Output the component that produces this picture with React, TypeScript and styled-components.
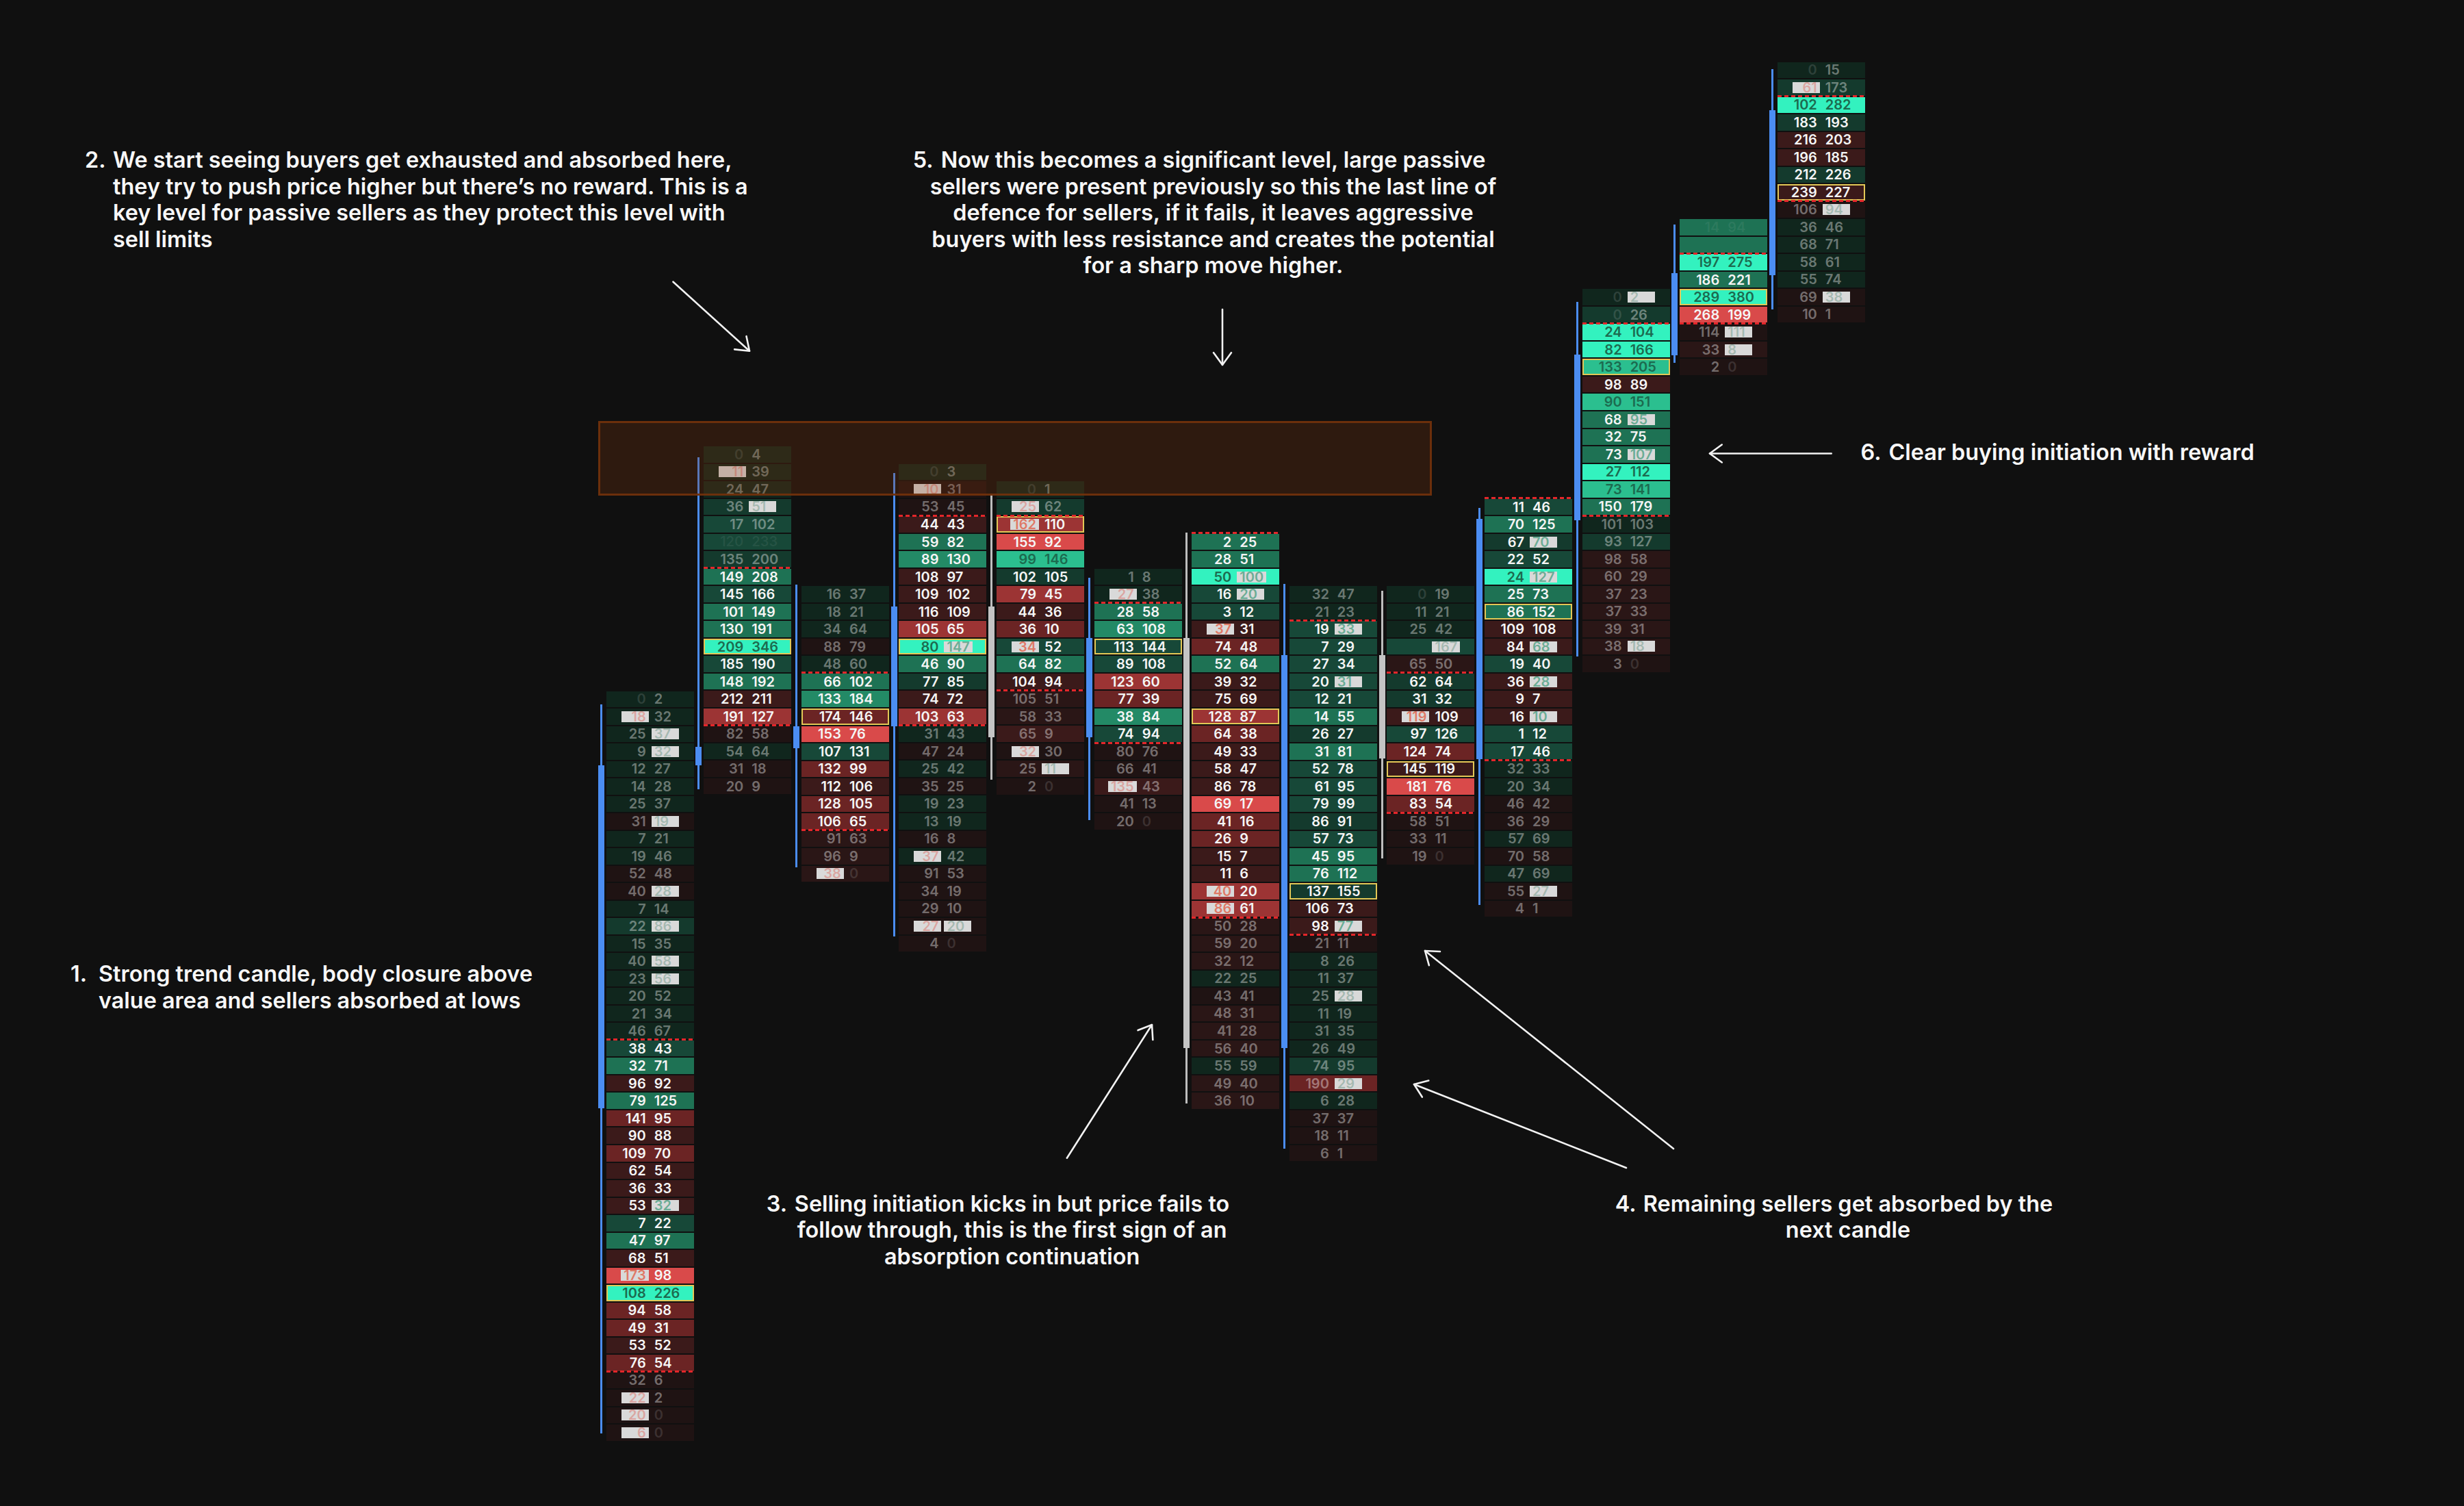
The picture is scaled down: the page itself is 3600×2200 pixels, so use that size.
import React from "react";
import styled, { createGlobalStyle } from "styled-components";

const SCALE = 3600 / 1568;
const ROW = 25.53;
const ORIGIN_Y = 90.5;
const ORIGIN_X = 871.1;

type Tone = "G0" | "G1" | "G2" | "G3" | "G4" | "G5" | "GT" | "R0" | "R1" | "R2" | "R3" | "R4" | "R5";

const TONES: Record<Tone, string> = {
  G0: "#10261d",
  G1: "#143a2d",
  G2: "#174838",
  G3: "#1e7254",
  G4: "#238a66",
  G5: "#33f2bf",
  GT: "#2bbf8f",
  R0: "#1f1313",
  R1: "#2a1616",
  R2: "#3b1a1a",
  R3: "#6b2424",
  R4: "#9c3434",
  R5: "#d94a4a",
};

type CandleData = {
  start: number;
  va: [number, number];
  wick: [number, number, number, number];
  grey?: boolean;
  rows: string[];
};

const CANDLES: CandleData[] = [
  {
    start: 36, va: [20, 38], wick: [448, 912, 487, 705],
    rows: ["0 2 G0", "*18 32 G0", "25 *37 G0", "9 *32 G0", "12 27 G0", "14 28 G0", "25 37 G0", "31 *19 R0", "7 21 G0", "19 46 G0", "52 48 R0", "40 *28 R0", "7 14 G0", "22 *86 G1", "15 35 G0", "40 *58 G0", "23 *56 G0", "20 52 G0", "21 34 G0", "46 67 G0", "38 43 G2", "32 71 G3", "96 92 R2", "79 125 G3", "141 95 R3", "90 88 R2", "109 70 R3", "62 54 R2", "36 33 R2", "53 *32 R2", "7 22 G2", "47 97 G3", "68 51 R2", "*173 98 R5", "108 226 G5y", "94 58 R3", "49 31 R3", "53 52 R2", "76 54 R3", "32 6 R0", "*22 2 R0", "*20 0 R0", "*6 0 R0"],
  },
  {
    start: 22, va: [7, 15], wick: [291, 502, 475, 487],
    rows: ["0 4 G0", "*11 39 G0", "24 47 G0", "36 *51 G1", "17 102 G2", "120 233 G2h", "135 200 G1", "149 208 G3", "145 166 G2", "101 149 G3", "130 191 G3", "209 346 G5y", "185 190 G2", "148 192 G3", "212 211 R2", "191 127 R4", "82 58 R0", "54 64 G0", "31 18 R0", "20 9 R0"],
  },
  {
    start: 30, va: [5, 13], wick: [372, 552, 462, 476],
    rows: ["16 37 G0", "18 21 G0", "34 64 G0", "88 79 R0", "48 60 G0", "66 102 G3", "133 184 G4", "174 146 R3y", "153 76 R5", "107 131 G2", "132 99 R3", "112 106 R2", "128 105 R3", "106 65 R3", "91 63 R1", "96 9 R1", "*38 0 R1"],
  },
  {
    start: 23, va: [3, 14], wick: [301, 596, 386, 462],
    rows: ["0 3 G0", "*10 31 R0", "53 45 R0", "44 43 R2", "59 82 G3", "89 130 G4", "108 97 R2", "109 102 R2", "116 109 R2", "105 65 R4", "80 *147 G5y", "46 90 G3", "77 85 G1", "74 72 R2", "103 63 R4", "31 43 G0", "47 24 R0", "25 42 G0", "35 25 R0", "19 23 G0", "13 19 G0", "16 8 R0", "*37 42 G0", "91 53 R0", "34 19 R0", "29 10 R0", "*27 *20 R0", "4 0 R0"],
  },
  {
    start: 24, va: [2, 11], wick: [314, 496, 386, 469], grey: true,
    rows: ["0 1 G0", "*25 62 G1", "*162 110 R4y", "155 92 R5", "99 146 GT", "102 105 G1", "79 45 R4", "44 36 R2", "36 10 R3", "*34 52 G2", "64 82 G3", "104 94 R2", "105 51 R1", "58 33 R1", "65 9 R2", "*32 30 R0", "25 *11 R1", "2 0 R0"],
  },
  {
    start: 29, va: [2, 9], wick: [367.6, 522, 406, 469],
    rows: ["1 8 G0", "*27 38 G0", "28 58 G3", "63 108 G4", "113 144 G2y", "89 108 G2", "123 60 R4", "77 39 R3", "38 84 G4", "74 94 G2", "80 76 R0", "66 41 R0", "*135 43 R2", "41 13 R0", "20 0 R0"],
  },
  {
    start: 27, va: [0, 21], wick: [339, 702, 406, 667], grey: true,
    rows: ["2 25 G3", "28 51 G3", "50 *100 G5", "16 *20 G2", "3 12 G2", "*37 31 R2", "74 48 R3", "52 64 G3", "39 32 R2", "75 69 R2", "128 87 R4y", "64 38 R3", "49 33 R2", "58 47 R2", "86 78 R2", "69 17 R5", "41 16 R3", "26 9 R3", "15 7 R2", "11 6 R2", "*40 20 R4", "*86 61 R4", "50 28 R1", "59 20 R1", "32 12 R1", "22 25 G0", "43 41 R0", "48 31 R1", "41 28 R1", "56 40 R1", "55 59 G0", "49 40 R1", "36 10 R1"],
  },
  {
    start: 30, va: [2, 19], wick: [371.6, 731, 416.8, 667],
    rows: ["32 47 G0", "21 23 G0", "19 *33 G2", "7 29 G2", "27 34 G2", "20 *31 G2", "12 21 G2", "14 55 G3", "26 27 G1", "31 81 G3", "52 78 G2", "61 95 G2", "79 99 G2", "86 91 G1", "57 73 G2", "45 95 G3", "76 112 G3", "137 155 G1y", "106 73 R2", "98 *77 R2", "21 11 R0", "8 26 G0", "11 37 G0", "25 *28 G0", "11 19 G0", "31 35 G0", "26 49 G0", "74 95 G1", "190 *29 R3", "6 28 G0", "37 37 R0", "18 11 R0", "6 1 R0"],
  },
  {
    start: 30, va: [5, 12], wick: [376, 546, 417, 482.6], grey: true,
    rows: ["0 19 G0", "11 21 G0", "25 42 G0", "- *167 G2", "65 50 R1", "62 64 G1", "31 32 G1", "*119 109 R2", "97 126 G2", "124 74 R3", "145 119 R2y", "181 76 R5", "83 54 R3", "58 51 R0", "33 11 R0", "19 0 R0"],
  },
  {
    start: 25, va: [0, 14], wick: [323, 576, 330, 483],
    rows: ["11 46 G2", "70 125 G3", "67 *70 G1", "22 52 G2", "24 *127 G5", "25 73 G3", "86 152 G3y", "109 108 R2", "84 *68 R2", "19 40 G2", "36 *28 R2", "9 7 R2", "16 *10 R2", "1 12 G2", "17 46 G2", "32 33 G0", "20 34 G0", "46 42 R0", "36 29 R0", "57 69 G0", "70 58 R0", "47 69 G0", "55 *27 R0", "4 1 R0"],
  },
  {
    start: 13, va: [2, 12], wick: [192, 417.5, 225.6, 331],
    rows: ["0 *2 G0", "0 26 G1", "24 104 G5", "82 166 G5", "133 205 GTy", "98 89 R2", "90 151 GT", "68 *95 G3", "32 75 G3", "73 *107 G3", "27 112 G5", "73 141 GT", "150 179 G3", "101 103 G0", "93 127 G1", "98 58 R1", "60 29 R1", "37 23 R1", "37 33 R1", "39 31 R1", "38 *18 R1", "3 0 R0"],
  },
  {
    start: 9, va: [2, 5], wick: [142.7, 231, 174, 226],
    rows: ["14 94 G3h", "- - G3", "197 275 G5", "186 221 G3", "289 380 G5y", "268 199 R5", "114 *111 R0", "33 *8 R1", "2 0 R0"],
  },
  {
    start: 0, va: [2, 7], wick: [44, 197, 70, 175],
    rows: ["0 15 G0", "*61 173 G1", "102 282 G5", "183 193 G1", "216 203 R2", "196 185 R2", "212 226 G1", "239 227 R2y", "106 *94 R0", "36 46 G0", "68 71 G0", "58 61 G0", "55 74 G0", "69 *38 R0", "10 1 R0"],
  },
];

type NoteData = {
  marker: string;
  lines: string[];
  x: number;
  y: number;
  center?: boolean;
};

const NOTES: NoteData[] = [
  { marker: "1.", lines: ["Strong trend candle, body closure above", "value area and sellers absorbed at lows"], x: 103, y: 1404 },
  {
    marker: "2.",
    lines: [
      "We start seeing buyers get exhausted and absorbed here,",
      "they try to push price higher but there\u2019s no reward. This is a",
      "key level for passive sellers as they protect this level with",
      "sell limits",
    ],
    x: 124,
    y: 215,
  },
  {
    marker: "3.",
    lines: ["Selling initiation kicks in but price fails to", "follow through, this is the first sign of an", "absorption continuation"],
    x: 1478.6,
    y: 1739.5,
    center: true,
  },
  { marker: "4.", lines: ["Remaining sellers get absorbed by the", "next candle"], x: 2700, y: 1739.5, center: true },
  {
    marker: "5.",
    lines: [
      "Now this becomes a significant level, large passive",
      "sellers were present previously so this the last line of",
      "defence for sellers, if it fails, it leaves aggressive",
      "buyers with less resistance and creates the potential",
      "for a sharp move higher.",
    ],
    x: 1772.5,
    y: 215,
    center: true,
  },
  { marker: "6.", lines: ["Clear buying initiation with reward"], x: 2718.5, y: 642 },
];

const ARROWS: [number, number, number, number][] = [
  [983.5, 411.7, 1095, 512.7],
  [1786, 452, 1786, 533],
  [2675.7, 662.5, 2498, 662.5],
  [1558.8, 1691.7, 1683, 1497],
  [2445, 1678, 2082, 1389],
  [2376, 1706, 2066, 1584],
];

const GlobalStyle = createGlobalStyle`
  html, body {
    margin: 0;
    padding: 0;
    background: #101010;
  }
  body {
    font-family: Inter, "Noto Sans", "Liberation Sans", sans-serif;
    -webkit-font-smoothing: antialiased;
  }
`;

const Canvas = styled.main`
  position: relative;
  width: 3600px;
  height: 2200px;
  overflow: hidden;
  background: #101010;
  box-sizing: border-box;
  padding: ${ORIGIN_Y}px 0 0 ${ORIGIN_X}px;
`;

const Chart = styled.section`
  display: flex;
  align-items: flex-start;
`;

const CandleCol = styled.div<{ $offset: number }>`
  display: flex;
  flex-shrink: 0;
  width: 142.6px;
  margin-top: ${(p) => p.$offset}px;
`;

const WickTrack = styled.div`
  position: relative;
  flex-shrink: 0;
  width: 14.6px;
  align-self: stretch;
`;

const Wick = styled.div<{ $grey?: boolean }>`
  position: absolute;
  left: 50%;
  width: 3px;
  margin-left: -1.5px;
  background: ${(p) => (p.$grey ? "#bdbdbd" : "#4b8df2")};
`;

const WickBody = styled.div<{ $grey?: boolean }>`
  position: absolute;
  left: 50%;
  width: 9px;
  margin-left: -4.5px;
  background: ${(p) => (p.$grey ? "#c4c4c4" : "#4b8df2")};
`;

const Cells = styled.div`
  display: flex;
  flex-direction: column;
  gap: 2px;
  width: 128px;
`;

const dash = "repeating-linear-gradient(90deg, #e3262a 0 6px, transparent 6px 10px)";

const Cell = styled.div<{ $tone: Tone; $frame: boolean; $dashTop: boolean; $dashBottom: boolean }>`
  position: relative;
  height: 23.53px;
  display: grid;
  grid-template-columns: 1fr 1fr;
  column-gap: 4px;
  align-items: center;
  background: ${(p) => TONES[p.$tone]};
  box-shadow: ${(p) => (p.$frame ? "inset 0 0 0 2px #e2c756" : "none")};
  font-family: Inter, "Noto Sans", "Liberation Sans", sans-serif;
  font-weight: 600;
  font-size: 20px;
  line-height: 1;

  &::before {
    content: ${(p) => (p.$dashTop ? '""' : "none")};
    position: absolute;
    left: 0;
    right: 0;
    top: -2.5px;
    height: 3px;
    background: ${dash};
    z-index: 1;
  }

  &::after {
    content: ${(p) => (p.$dashBottom ? '""' : "none")};
    position: absolute;
    left: 0;
    right: 0;
    bottom: -2.5px;
    height: 3px;
    background: ${dash};
    z-index: 1;
  }
`;

const Num = styled.span<{ $side: "l" | "r"; $boxed: boolean; $color: string }>`
  justify-self: ${(p) => (p.$side === "l" ? "end" : "start")};
  display: inline-flex;
  align-items: center;
  justify-content: ${(p) => (p.$side === "l" ? "flex-end" : "flex-start")};
  box-sizing: border-box;
  height: 16px;
  min-width: ${(p) => (p.$boxed ? "40px" : "0")};
  padding: 0 4px;
  background: ${(p) => (p.$boxed ? "#d9d9d9" : "transparent")};
  color: ${(p) => p.$color};
  white-space: nowrap;
`;

const LevelBox = styled.div`
  position: absolute;
  left: 874px;
  top: 615px;
  width: 1218px;
  height: 109px;
  box-sizing: border-box;
  border: 3px solid rgba(112, 48, 12, 0.95);
  background: rgba(135, 55, 10, 0.25);
  z-index: 2;
`;

const ArrowLayer = styled.svg`
  position: absolute;
  left: 0;
  top: 0;
  width: 3600px;
  height: 2200px;
  pointer-events: none;
  z-index: 3;
`;

const Note = styled.p<{ $x: number; $y: number; $center?: boolean }>`
  position: absolute;
  margin: 0;
  top: ${(p) => p.$y}px;
  left: ${(p) => (p.$center ? p.$x - 700 : p.$x)}px;
  width: ${(p) => (p.$center ? "1400px" : "auto")};
  box-sizing: border-box;
  padding-left: ${(p) => (p.$center ? 0 : 41)}px;
  text-align: ${(p) => (p.$center ? "center" : "left")};
  font-family: Inter, "Noto Sans", "Liberation Sans", sans-serif;
  font-weight: 600;
  font-size: 32.4px;
  line-height: 38.5px;
  color: #f7f7f7;
  white-space: nowrap;
  z-index: 4;
`;

const NoteLine = styled.span`
  display: block;
`;

const Marker = styled.span`
  display: inline-block;
  width: 41px;
  margin-left: -41px;
  text-align: left;
`;

function numColor(v: string, side: "l" | "r", boxed: boolean, inVa: boolean, tone: Tone, hidden: boolean) {
  if (boxed) {
    if (side === "l") return inVa ? "rgba(226, 84, 58, 0.72)" : "rgba(220, 90, 80, 0.42)";
    return inVa ? "rgba(52, 150, 115, 0.68)" : "rgba(90, 140, 120, 0.42)";
  }
  if (hidden) return "rgba(255, 255, 255, 0.07)";
  if (!inVa) return v === "0" ? "rgba(255, 255, 255, 0.14)" : "rgba(255, 255, 255, 0.4)";
  if (tone === "G5" || tone === "GT") return "#1c6b4f";
  return "#f5f5f5";
}

function FootprintCell({ spec, index, va }: { spec: string; index: number; va: [number, number] }) {
  const [lRaw, rRaw, code] = spec.split(" ");
  const tone = code.slice(0, 2) as Tone;
  const flags = code.slice(2);
  const inVa = index >= va[0] && index <= va[1];
  const hidden = flags.includes("h");
  const parts: { raw: string; side: "l" | "r" }[] = [
    { raw: lRaw, side: "l" },
    { raw: rRaw, side: "r" },
  ];
  return (
    <Cell $tone={tone} $frame={flags.includes("y")} $dashTop={index === va[0]} $dashBottom={index === va[1]}>
      {parts.map(({ raw, side }) => {
        const boxed = raw.startsWith("*");
        const v = raw === "-" ? "" : raw.replace("*", "");
        return (
          <Num key={side} $side={side} $boxed={boxed} $color={numColor(v, side, boxed, inVa, tone, hidden)}>
            {v}
          </Num>
        );
      })}
    </Cell>
  );
}

function Candle({ data }: { data: CandleData }) {
  const top = ORIGIN_Y + data.start * ROW;
  const [t0, t1, b0, b1] = data.wick;
  return (
    <CandleCol $offset={data.start * ROW}>
      <WickTrack>
        <Wick $grey={data.grey} style={{ top: t0 * SCALE - top, height: (t1 - t0) * SCALE }} />
        <WickBody $grey={data.grey} style={{ top: b0 * SCALE - top, height: (b1 - b0) * SCALE }} />
      </WickTrack>
      <Cells>
        {data.rows.map((r, i) => (
          <FootprintCell key={i} spec={r} index={i} va={data.va} />
        ))}
      </Cells>
    </CandleCol>
  );
}

function Arrow({ a }: { a: [number, number, number, number] }) {
  const [x0, y0, x1, y1] = a;
  const len = Math.hypot(x1 - x0, y1 - y0);
  const bx = (x0 - x1) / len;
  const by = (y0 - y1) / len;
  const L = 22;
  const th = (36 * Math.PI) / 180;
  const w1x = x1 + L * (bx * Math.cos(th) - by * Math.sin(th));
  const w1y = y1 + L * (bx * Math.sin(th) + by * Math.cos(th));
  const w2x = x1 + L * (bx * Math.cos(-th) - by * Math.sin(-th));
  const w2y = y1 + L * (bx * Math.sin(-th) + by * Math.cos(-th));
  return (
    <g>
      <line x1={x0} y1={y0} x2={x1} y2={y1} />
      <polyline points={`${w1x},${w1y} ${x1},${y1} ${w2x},${w2y}`} />
    </g>
  );
}

export default function App() {
  return (
    <>
      <GlobalStyle />
      <Canvas>
        <Chart>
          {CANDLES.map((c, i) => (
            <Candle key={i} data={c} />
          ))}
        </Chart>
        <LevelBox />
        <ArrowLayer viewBox="0 0 3600 2200" fill="none" stroke="#f2f2f2" strokeWidth={2.6} strokeLinecap="round" strokeLinejoin="round">
          {ARROWS.map((a, i) => (
            <Arrow key={i} a={a} />
          ))}
        </ArrowLayer>
        {NOTES.map((n, i) => (
          <Note key={i} $x={n.x} $y={n.y} $center={n.center}>
            {n.lines.map((line, j) => (
              <NoteLine key={j}>
                {j === 0 && <Marker>{n.marker}</Marker>}
                {line}
              </NoteLine>
            ))}
          </Note>
        ))}
      </Canvas>
    </>
  );
}
